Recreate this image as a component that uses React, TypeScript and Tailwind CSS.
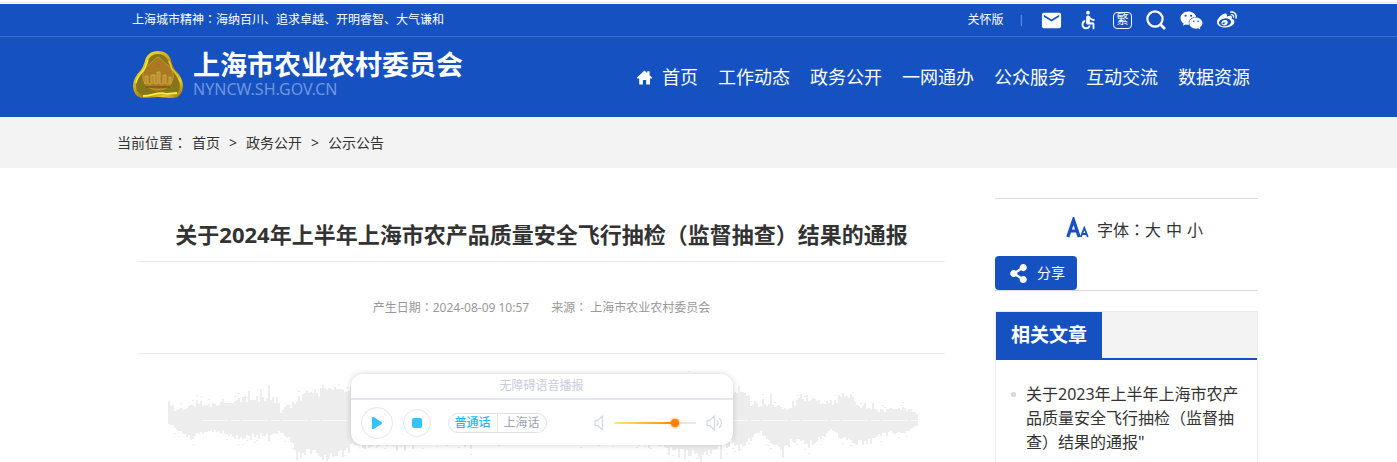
import React, { useState } from 'react';
import { MdAccessible, MdEmail } from 'react-icons/md';
import { FaShareAlt, FaWeibo, FaWeixin } from 'react-icons/fa';

const navItems = ['工作动态', '政务公开', '一网通办', '公众服务', '互动交流', '数据资源'];

// [x, height above the axis, height below the axis]
const envelope = [
  [0, 18, 3], [4, 12, 5], [14, 11, 12], [24, 18, 17], [36, 14, 12], [48, 18, 10],
  [62, 22, 14], [74, 24, 18], [90, 22, 13], [102, 24, 15], [112, 10, 11], [122, 16, 22],
  [132, 25, 32], [144, 27, 31], [157, 34, 36], [172, 30, 34], [183, 32, 26], [240, 30, 20],
  [330, 30, 18], [490, 30, 20], [502, 30, 32], [530, 30, 33], [550, 28, 28], [564, 30, 22],
  [572, 32, 24], [582, 18, 18], [592, 14, 12], [602, 18, 21], [614, 12, 26], [626, 18, 20],
  [634, 25, 22], [644, 22, 22], [654, 17, 16], [664, 18, 9], [674, 26, 18], [684, 24, 22],
  [690, 15, 21], [702, 12, 20], [712, 11, 14], [724, 12, 12], [736, 13, 13], [746, 9, 6], [750, 5, 4],
];

const noise = (n: number) => {
  const v = Math.sin(n * 12.9898) * 43758.5453;
  return v - Math.floor(v);
};

const buildBars = () => {
  const bars: { x: number; up: number; down: number }[] = [];
  let seg = 0;
  for (let x = 0; x < 750; x += 2) {
    while (seg < envelope.length - 2 && x >= envelope[seg + 1][0]) seg++;
    const [x0, u0, d0] = envelope[seg];
    const [x1, u1, d1] = envelope[seg + 1];
    const t = (x - x0) / (x1 - x0);
    const peakUp = noise(x + 9) > 0.9 ? 1.35 : 1;
    const peakDown = noise(x + 19) > 0.92 ? 1.3 : 1;
    bars.push({
      x,
      up: Math.round((u0 + (u1 - u0) * t) * (0.8 + noise(x + 1) * 0.35) * peakUp),
      down: Math.round((d0 + (d1 - d0) * t) * (0.8 + noise(x + 500) * 0.35) * peakDown),
    });
  }
  return bars;
};

const bars = buildBars();

const Waveform = () => (
  <svg className="absolute left-[30px] top-0" width="750" height="108" viewBox="0 0 750 108" aria-hidden="true">
    <g fill="#ededed" shapeRendering="crispEdges">
      {bars.map((b) => (
        <React.Fragment key={b.x}>
          <rect x={b.x} y={67 - b.up} width="2" height={b.up + b.down} />
          {noise(b.x + 77) > 0.84 && <rect x={b.x} y={62 - b.up} width="2" height="1" />}
          {noise(b.x + 31) > 0.82 && <rect x={b.x} y={72 + b.down} width="2" height="1" />}
        </React.Fragment>
      ))}
    </g>
    <path d="M34 66.5H750" stroke="#f8f8f8" strokeDasharray="26 3 9 2" />
  </svg>
);

const Emblem = () => (
  <svg width="50" height="47" viewBox="0 0 50 47" aria-hidden="true">
    <defs>
      <linearGradient id="gold" x1="0" y1="0" x2="1" y2="1">
        <stop offset="0" stopColor="#fff04a" />
        <stop offset="0.35" stopColor="#d6b518" />
        <stop offset="0.6" stopColor="#a87c14" />
        <stop offset="0.8" stopColor="#e8cc22" />
        <stop offset="1" stopColor="#9c7412" />
      </linearGradient>
    </defs>
    <path
      d="M25 1.5C30 1.5 34 4 36 8C37 12 38 16 41 20C45 24 48.500 29 48.500 35C48.500 41 45 45.500 40 45.500C34 45.500 30 44.500 25 44.500C20 44.500 16 45.500 10 45.500C5 45.500 1.500 41 1.500 35C1.500 29 5 24 9 20C12 16 13 12 14 8C16 4 20 1.5 25 1.5Z"
      fill="#85761a"
      stroke="url(#gold)"
      strokeWidth="3"
    />
    <path d="M25 6C29 8 31 11 33 13C38 16 41 21 40 27C39 35 32 39 25 39C18 39 11 35 10 27C9 21 12 16 17 13C19 11 21 8 25 6Z" fill="#a97a22" stroke="#c39a2c" />
    <path d="M12 33V25H15V33H18V24H22V33H24V21H27V33H30V24H33V33H36V26H38V33" fill="#b98f30" stroke="#d3ae45" strokeWidth="0.8" />
    <path d="M13 36H37" stroke="#80581a" strokeWidth="1.5" />
    <path d="M10 45C20 45 25 40 34 43L44 42" fill="none" stroke="#ffef3d" strokeWidth="1.8" />
    <path d="M3 32C4 25 9 22 12 17L15 9" fill="none" stroke="#f8e338" strokeWidth="1.5" />
    <path d="M36 10L39 18C43 22 46 26 47 31" fill="none" stroke="#e6c828" strokeWidth="1.5" />
  </svg>
);

const HomeIcon = () => (
  <svg width="15" height="15" viewBox="0 0 15 15" fill="#fff" aria-hidden="true">
    <path d="M7.5 0.5L10.2 3V1.2H12.6V5.2L15 7.6V8.5H13V14.5H9.2V10H5.9V14.5H2.2V8.5H0V7.6Z" />
  </svg>
);

// Full-width colon sits in the middle of its cell
const Colon = () => <span className="font-['Noto_Sans_CJK_TC',sans-serif]">：</span>;

const VolumeLow = () => (
  <svg width="10" height="16" viewBox="0 0 10 16" fill="none" stroke="#d8dae3" strokeWidth="1.3" aria-hidden="true">
    <path d="M1 5.5H3.5L8.5 1V15L3.5 10.5H1Z" strokeLinejoin="round" />
  </svg>
);

const VolumeHigh = () => (
  <svg width="17" height="16" viewBox="0 0 17 16" fill="none" stroke="#d8dae3" strokeWidth="1.3" aria-hidden="true">
    <path d="M1 5.5H3.5L8.5 1V15L3.5 10.5H1Z" strokeLinejoin="round" />
    <path d="M11 5.5C12.3 7 12.3 9 11 10.5M13.5 3.5C16 6 16 10 13.5 12.5" strokeLinecap="round" />
  </svg>
);

const Header = () => (
  <header className="border-t border-gray-200 bg-white pt-px text-white">
    <div className="border-b border-[#3f6ccb] bg-[#1651c1] pr-[22px]">
      <div className="mx-auto flex h-8 w-full max-w-[1141px] items-center justify-between pl-[15px] pr-[21px] text-xs">
        <p className="pb-[2px]">
          上海城市精神
          <Colon />
          海纳百川、追求卓越、开明睿智、大气谦和
        </p>
        <div className="flex items-center">
          <a href="#care">关怀版</a>
          <span className="ml-[15px] mr-4 text-[10px] text-[#8fadea]">|</span>
          <div className="flex items-center gap-[14px]">
            <a href="#mail" aria-label="邮箱"><MdEmail size={23} /></a>
            <a href="#accessible" aria-label="无障碍"><MdAccessible size={22} /></a>
            <a href="#traditional" className="flex h-[17px] w-[19px] items-center justify-center rounded border border-white text-xs">繁</a>
            <a href="#search" aria-label="搜索">
              <svg width="20" height="20" viewBox="0 0 20 20" fill="none" stroke="#fff" strokeWidth="2.2" aria-hidden="true">
                <circle cx="9" cy="9" r="7.6" />
                <path d="M14.5 14.5L19 19" strokeWidth="2.6" />
              </svg>
            </a>
            <a href="#wechat" aria-label="微信"><FaWeixin size={23} /></a>
            <a href="#weibo" aria-label="微博"><FaWeibo size={20} /></a>
          </div>
        </div>
      </div>
    </div>
    <div className="bg-[#1651c1] pr-[22px]">
      <div className="mx-auto flex h-20 w-full max-w-[1141px] items-center justify-between pl-4 pr-2">
        <a href="#home" className="flex items-center gap-[10px] pb-[6px]">
          <Emblem />
          <span className="flex flex-col">
            <span className="text-[27px] font-bold leading-[30px]">上海市农业农村委员会</span>
            <span className="text-base leading-[18px] text-[#6f96e0]">NYNCW.SH.GOV.CN</span>
          </span>
        </a>
        <nav className="flex items-center gap-5 text-lg">
          <a href="#index" className="flex items-center gap-[10px]">
            <HomeIcon />
            首页
          </a>
          {navItems.map((item) => (
            <a key={item} href={`#${item}`}>{item}</a>
          ))}
        </nav>
      </div>
    </div>
  </header>
);

const Player = () => {
  const [dialect, setDialect] = useState('普通话');
  const [volume, setVolume] = useState(78);

  return (
    <div className="relative z-10 mx-auto w-[382px] overflow-hidden rounded-xl bg-white shadow-[0_0_6px_rgba(0,0,0,0.18)]">
      <div className="border-b-2 border-[#e4e8ee] text-center text-xs leading-6 text-[#c9cbdd]">无障碍语音播报</div>
      <div className="flex h-[45px] items-center px-[10px]">
        <button aria-label="播放" className="flex h-8 w-8 items-center justify-center rounded-full border border-[#e3e3ef]">
          <svg width="12" height="14" viewBox="0 0 12 14" fill="#34c3ff" aria-hidden="true">
            <path d="M1 1.8Q1 0 2.8 1L10.5 6Q11.8 7 10.5 8L2.8 13Q1 14 1 12.2Z" />
          </svg>
        </button>
        <button aria-label="停止" className="ml-[10px] flex h-7 w-7 items-center justify-center rounded-full border border-[#e3e3ef]">
          <span className="h-[10px] w-[10px] rounded-[2px] bg-[#34c3ff]" />
        </button>
        <div className="ml-[17px] flex h-5 rounded-full border border-[#dfe0ec] text-xs leading-[18px]">
          {['普通话', '上海话'].map((name) => (
            <button
              key={name}
              onClick={() => setDialect(name)}
              className={`px-[6px] first:border-r first:border-[#dfe0ec] ${
                dialect === name ? 'font-medium text-[#18baff]' : 'text-[#9c9fb5]'
              }`}
            >
              {name}
            </button>
          ))}
        </div>
        <div className="ml-auto flex items-center gap-[10px]">
          <VolumeLow />
          <input
            type="range"
            aria-label="音量"
            value={volume}
            onChange={(e) => setVolume(Number(e.target.value))}
            style={{ backgroundImage: `linear-gradient(to right, #ffee70, #ff7f00 ${volume}%, #e4e8ee ${volume}%)` }}
            className="h-[2px] w-[82px] appearance-none [&::-webkit-slider-thumb]:h-2 [&::-webkit-slider-thumb]:w-2 [&::-webkit-slider-thumb]:appearance-none [&::-webkit-slider-thumb]:rounded-full [&::-webkit-slider-thumb]:bg-[#ff7f00] [&::-webkit-slider-thumb]:shadow-[0_0_3px_#ff7f00]"
          />
          <VolumeHigh />
        </div>
      </div>
    </div>
  );
};

const Sidebar = () => (
  <aside className="flex w-[263px] shrink-0 flex-col pt-[30px]">
    <div className="border-y border-[#dcdcdc]">
      <div className="flex items-center justify-center gap-2 pb-[11px] pl-4 pt-[14px] text-base text-[#333]">
        <svg width="23" height="22" viewBox="0 0 23 22" className="-mt-1" fill="none" stroke="#1651c1" aria-hidden="true">
          <path d="M1.8 20L7.5 3L13.2 20M3.5 14H11.5" strokeWidth="3.2" />
          <path d="M14.8 20L18.3 11L21.8 20M16 17H20.5" strokeWidth="1.8" />
        </svg>
        <div className="flex leading-8">
          <span>字体<Colon /></span>
          <div className="flex gap-[5px]">
            <button>大</button>
            <button>中</button>
            <button>小</button>
          </div>
        </div>
      </div>
      <button className="-mt-px flex h-[34px] w-[82px] items-center gap-[9px] rounded bg-[#1651c1] pl-[14px] text-sm text-white">
        <FaShareAlt size={19} />
        分享
      </button>
    </div>
    <section className="mt-5 flex-1 border border-b-0 border-[#ececec]">
      <div className="flex border-b-2 border-[#1651c1] bg-[#f3f3f3]">
        <h2 className="bg-[#1651c1] px-[15px] text-[19px] font-bold leading-[46px] text-white">相关文章</h2>
      </div>
      <ul className="px-[15px] pt-[22px]">
        <li className="flex gap-[10px]">
          <span className="mt-[10px] h-[5px] w-[5px] shrink-0 rounded-full bg-[#d8d8d8]" />
          <a href="#related" className="text-base leading-6 text-[#333]">
            关于2023年上半年上海市农产品质量安全飞行抽检（监督抽查）结果的通报"
          </a>
        </li>
      </ul>
    </section>
  </aside>
);

const App = () => (
  <div className="flex min-h-screen flex-col bg-white pt-[2px] font-['Noto_Sans','Noto_Sans_CJK_SC',sans-serif] text-[#333]">
    <Header />

    {/* Breadcrumb */}
    <div className="bg-[#f3f3f3] pr-[22px]">
      <nav className="mx-auto flex w-full max-w-[1141px] gap-[9px] text-sm leading-[51px]">
        <span className="flex gap-[5px]">
          <span>当前位置<Colon /></span>
          <a href="#index">首页</a>
        </span>
        <span>&gt;</span>
        <a href="#open">政务公开</a>
        <span>&gt;</span>
        <a href="#notice">公示公告</a>
      </nav>
    </div>

    {/* Article */}
    <div className="flex flex-1 pr-[22px]">
      <div className="mx-auto flex w-full max-w-[1141px] gap-[50px] pl-[21px]">
        <main className="flex min-w-0 flex-1 flex-col pt-[50px]">
          <h1 className="border-b border-[#ececec] pb-[11px] text-center text-[22px] font-bold leading-8">
            关于2024年上半年上海市农产品质量安全飞行抽检（监督抽查）结果的通报
          </h1>
          <div className="flex justify-center gap-[22px] border-b border-[#ececec] py-[35px] text-xs leading-5 text-[#999]">
            <span>产生日期<Colon />2024-08-09 10:57</span>
            <span>来源<Colon /> 上海市农业农村委员会</span>
          </div>
          <div className="relative flex-1 overflow-hidden pb-4 pt-5">
            <Waveform />
            <Player />
          </div>
        </main>
        <Sidebar />
      </div>
    </div>
  </div>
);

export default App;
